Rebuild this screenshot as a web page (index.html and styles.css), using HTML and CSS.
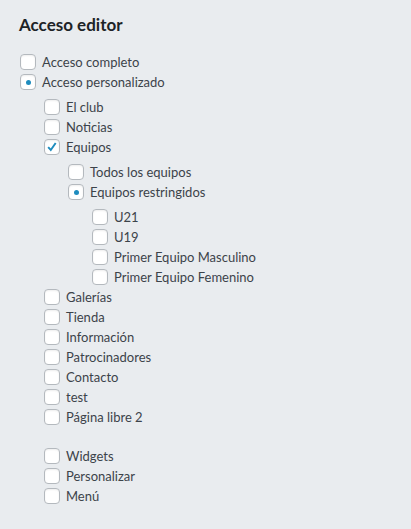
FILE: index.html
```html
<!DOCTYPE html>
<html lang="es">
  <head>
    <title>Acceso editor</title>
    <meta charset="UTF-8" />
    <meta name="viewport" content="width=device-width, initial-scale=1.0" />
    <link rel="stylesheet" href="styles.css">
  </head>
  <body>
    <div class="panel">
      <h2>Acceso editor</h2>

      <ul class="perms">
        <li><label><span class="box"></span>Acceso completo</label></li>
        <li>
          <label><span class="box radio on"></span>Acceso personalizado</label>
          <ul class="sub">
            <li><label><span class="box"></span>El club</label></li>
            <li><label><span class="box"></span>Noticias</label></li>
            <li>
              <label><span class="box checked"><svg viewBox="0 0 16 16"><path d="M3.6 8.2l3 3.2 5.6-8" /></svg></span>Equipos</label>
              <ul class="sub">
                <li><label><span class="box radio"></span>Todos los equipos</label></li>
                <li>
                  <label><span class="box radio on"></span>Equipos restringidos</label>
                  <ul class="sub">
                    <li><label><span class="box"></span>U21</label></li>
                    <li><label><span class="box"></span>U19</label></li>
                    <li><label><span class="box"></span>Primer Equipo Masculino</label></li>
                    <li><label><span class="box"></span>Primer Equipo Femenino</label></li>
                  </ul>
                </li>
              </ul>
            </li>
            <li><label><span class="box"></span>Galerías</label></li>
            <li><label><span class="box"></span>Tienda</label></li>
            <li><label><span class="box"></span>Información</label></li>
            <li><label><span class="box"></span>Patrocinadores</label></li>
            <li><label><span class="box"></span>Contacto</label></li>
            <li><label><span class="box"></span>test</label></li>
            <li><label><span class="box"></span>Página libre 2</label></li>
          </ul>
          <ul class="sub extra">
            <li><label><span class="box"></span>Widgets</label></li>
            <li><label><span class="box"></span>Personalizar</label></li>
            <li><label><span class="box"></span>Menú</label></li>
          </ul>
        </li>
      </ul>
    </div>
  </body>
</html>
```

FILE: styles.css
```css
body {
  font-family: Lato, "Open Sans", sans-serif;
  background-color: #e9ecef;
  color: #3c434a;
  margin: 0;
  padding: 0;
}
.panel {
  padding: 14px 20px 20px 19px;
}
h2 {
  font-size: 17px;
  font-weight: 700;
  color: #1d2327;
  margin: 0 0 17px;
}
ul {
  list-style: none;
  margin: 0;
  padding: 0;
}
.sub {
  padding: 5px 0 0 24px;
}
.sub.extra {
  padding-top: 19px;
}
.perms li label {
  display: flex;
  align-items: center;
  height: 20px;
  font-size: 13px;
  line-height: 20px;
}
.box {
  width: 14px;
  height: 14px;
  border: 1px solid #b4b9be;
  border-radius: 4px;
  background: white;
  margin: 0 6px 0 1px;
  display: flex;
  align-items: center;
  justify-content: center;
  flex: none;
  box-shadow: inset 0 1px 2px rgba(0, 0, 0, 0.07);
}
.box.radio.on::after {
  content: '';
  width: 5px;
  height: 5px;
  border-radius: 50%;
  background: #1e8cbe;
}
.box svg {
  width: 16px;
  height: 16px;
}
.box svg path {
  fill: none;
  stroke: #1e8cbe;
  stroke-width: 2.2;
}
```
